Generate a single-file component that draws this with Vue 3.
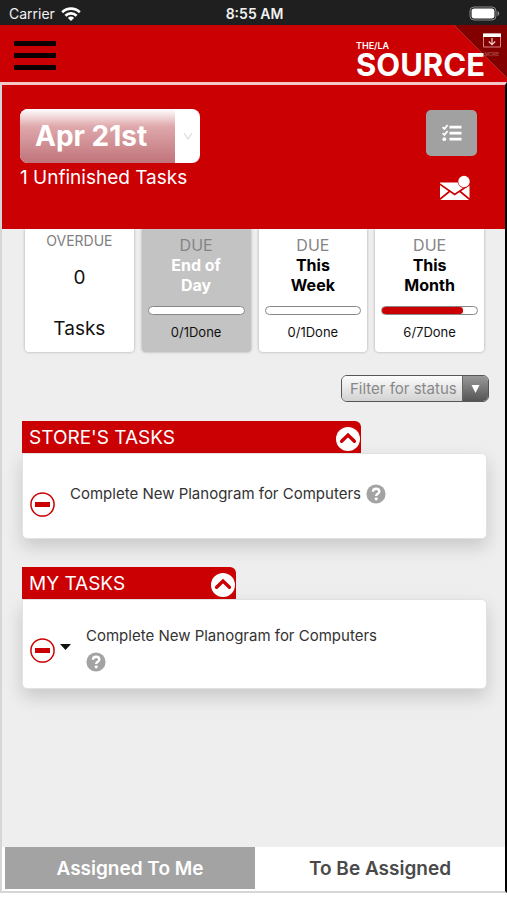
<script setup>
import { ref } from 'vue'

const openStore = ref(true)
const openMine = ref(true)
const tab = ref('me')

const periods = [
  { line1: 'End of', line2: 'Day', done: 0, total: 1, active: true },
  { line1: 'This', line2: 'Week', done: 0, total: 1, active: false },
  { line1: 'This', line2: 'Month', done: 6, total: 7, active: false },
]
</script>

<template>
  <div class="app">
    <div class="status">
      <div class="carrier">
        <span>Carrier</span>
        <svg width="20" height="14" viewBox="0 0 20 14" aria-hidden="true">
          <g fill="none" stroke="#fff" stroke-width="2.6">
            <path d="M1.2 5.2a12.6 12.6 0 0 1 17.6 0" />
            <path d="M4.4 8.7a8 8 0 0 1 11.2 0" />
          </g>
          <path d="M10 14 6.9 10.9a4.4 4.4 0 0 1 6.2 0z" fill="#fff" />
        </svg>
      </div>
      <div class="clock">8:55 AM</div>
      <div class="battery">
        <svg width="31" height="15" viewBox="0 0 31 15" aria-hidden="true">
          <rect x="1" y="1" width="26" height="13" rx="4" fill="none" stroke="#8a8a8a" />
          <rect x="2.6" y="2.6" width="22.8" height="9.8" rx="2.6" fill="#fff" />
          <path d="M28.5 5v5q1.800-.8 1.800-2.500t-1.800-2.500z" fill="#8a8a8a" />
        </svg>
      </div>
    </div>

    <header class="header">
      <button class="burger" aria-label="Menu"><i></i><i></i><i></i></button>
      <div class="logo">
        <span class="logo-top">THE/LA</span>
        <span class="logo-main">SOURCE</span>
      </div>
      <button class="corner" aria-label="More">
        <svg width="53" height="53" viewBox="0 0 53 53" aria-hidden="true">
          <path d="M0 0h53v53z" fill="#820000" />
          <path d="M0 0 53 53" stroke="#b04030" stroke-width=".8" />
          <path d="M29.500 9h17v13h-17z" fill="none" stroke="#d98080" />
          <path d="M29 8.500h18v3.500h-18z" fill="#fff" />
          <path d="M38 13v6.500M34.800 16.500l3.200 3.200 3.200-3.200" fill="none" stroke="#f3cccc" stroke-width="1.200" />
        </svg>
        <span class="corner-text">MORE</span>
      </button>
    </header>

    <main class="panel">
      <section class="hero">
        <div>
          <div class="date">
            <select aria-label="Date"><option>Apr 21st</option></select>
            <span class="date-arrow">
              <svg width="10" height="8" viewBox="0 0 10 8" aria-hidden="true"><path d="M1 1l4 6 4-6" fill="none" stroke="#ddd" stroke-width="1.300" /></svg>
            </span>
          </div>
          <p class="unfinished">1 Unfinished Tasks</p>
        </div>
        <div class="actions">
          <button class="list-btn" aria-label="Task list">
            <svg width="20" height="18" viewBox="0 0 20 18" aria-hidden="true">
              <path d="M7.500 3.200h12M7.500 9.200h12M7.500 15.200h12" stroke="#fff" stroke-width="2.700" />
              <path d="M.6 3.200l1.800 1.800L5.600 1M.6 9.200l1.800 1.800L5.600 7" fill="none" stroke="#fff" stroke-width="1.800" />
              <circle cx="2.300" cy="15.200" r="1.900" fill="#fff" />
            </svg>
          </button>
          <button class="mail-btn" aria-label="Messages">
            <svg width="30" height="26" viewBox="0 0 30 26" aria-hidden="true">
              <path d="M0 7.500h29.500V25H0z" fill="#fff" />
              <path d="M-1 8.500l15.700 11L30.500 9M-1 25l11-9M30.500 25 19.500 16" fill="none" stroke="#cb0003" stroke-width="1.700" />
              <circle cx="24" cy="6.500" r="6.300" fill="#cb0003" />
              <circle cx="24" cy="6.500" r="5.700" fill="#fff" />
            </svg>
          </button>
        </div>
      </section>

      <section class="cards">
        <div class="card overdue">
          <span class="overdue-title">OVERDUE</span>
          <span>0</span>
          <span class="overdue-unit">Tasks</span>
        </div>
        <div v-for="p in periods" :key="p.line2" class="card" :class="{ active: p.active }">
          <span class="due">DUE</span>
          <strong>{{ p.line1 }}<br />{{ p.line2 }}</strong>
          <div class="bar"><div class="fill" :style="{ width: (p.done / p.total) * 100 + '%' }"></div></div>
          <span class="done">{{ p.done }}/{{ p.total }}Done</span>
        </div>
      </section>

      <div class="filter-row">
        <div class="filter">
          <select aria-label="Filter for status"><option>Filter for status</option></select>
          <span class="filter-arrow">
            <svg width="9" height="8" viewBox="0 0 9 8" aria-hidden="true"><path d="M.5 0h8L4.500 8z" fill="#fff" /></svg>
          </span>
        </div>
      </div>

      <section class="group">
        <div class="group-head store">
          <h2>STORE'S TASKS</h2>
          <button class="toggle" aria-label="Toggle store's tasks" @click="openStore = !openStore">
            <svg width="24" height="24" viewBox="0 0 24 24" aria-hidden="true"><circle cx="12" cy="12" r="12" fill="#fff" /><path d="M5.600 14.300 12 8.100l6.400 6.200" fill="none" stroke="#cb0003" stroke-width="3.400" stroke-linecap="round" /></svg>
          </button>
        </div>
        <div v-if="openStore" class="task">
          <svg class="minus" width="25" height="25" viewBox="0 0 25 25" aria-hidden="true"><circle cx="12.500" cy="12.500" r="11.600" fill="none" stroke="#cb0003" stroke-width="1.500" /><path d="M5 10h15v5H5z" fill="#cb0003" /></svg>
          <div class="task-text">
            <span>Complete New Planogram for Computers</span>
            <svg class="help" width="20" height="20" viewBox="0 0 20 20" aria-hidden="true"><circle cx="10" cy="10" r="9.600" fill="#a3a3a3" /><path d="M6.900 7.700C7 5.700 8.300 4.700 10.100 4.700c1.800 0 3.200 1 3.200 2.700 0 2.500-3.100 2.300-3.100 4.500" fill="none" stroke="#fff" stroke-width="2.400" /><circle cx="10.200" cy="14.800" r="1.600" fill="#fff" /></svg>
          </div>
        </div>
      </section>

      <section class="group">
        <div class="group-head mine">
          <h2>MY TASKS</h2>
          <button class="toggle" aria-label="Toggle my tasks" @click="openMine = !openMine">
            <svg width="24" height="24" viewBox="0 0 24 24" aria-hidden="true"><circle cx="12" cy="12" r="12" fill="#fff" /><path d="M5.600 14.300 12 8.100l6.400 6.200" fill="none" stroke="#cb0003" stroke-width="3.400" stroke-linecap="round" /></svg>
          </button>
        </div>
        <div v-if="openMine" class="task own">
          <button class="state" aria-label="Change task state">
            <svg class="minus" width="25" height="25" viewBox="0 0 25 25" aria-hidden="true"><circle cx="12.500" cy="12.500" r="11.600" fill="none" stroke="#cb0003" stroke-width="1.500" /><path d="M5 10h15v5H5z" fill="#cb0003" /></svg>
            <svg class="caret" width="11" height="6" viewBox="0 0 11 6" aria-hidden="true"><path d="M0 0h11L5.500 6z" fill="#111" /></svg>
          </button>
          <div class="task-text stacked">
            <span>Complete New Planogram for Computers</span>
            <svg class="help" width="20" height="20" viewBox="0 0 20 20" aria-hidden="true"><circle cx="10" cy="10" r="9.600" fill="#a3a3a3" /><path d="M6.900 7.700C7 5.700 8.300 4.700 10.100 4.700c1.800 0 3.200 1 3.200 2.700 0 2.500-3.100 2.300-3.100 4.500" fill="none" stroke="#fff" stroke-width="2.400" /><circle cx="10.200" cy="14.800" r="1.600" fill="#fff" /></svg>
          </div>
        </div>
      </section>

      <nav class="tabs">
        <button :class="{ on: tab === 'me' }" @click="tab = 'me'">Assigned To Me</button>
        <button :class="{ on: tab === 'open' }" @click="tab = 'open'">To Be Assigned</button>
      </nav>
    </main>
  </div>
</template>

<style>
body {
  background: #fff;
}
</style>

<style scoped>
* {
  box-sizing: border-box;
}
.app {
  display: flex;
  flex-direction: column;
  min-height: 100vh;
  padding-bottom: 7px;
  font-family: Inter, "Liberation Sans", sans-serif;
  color: #111;
}
button,
select {
  margin: 0;
  padding: 0;
  border: 0;
  background: none;
  font: inherit;
  color: inherit;
  appearance: none;
}
svg {
  display: block;
  flex: none;
}
.status {
  display: grid;
  grid-template-columns: 1fr auto 1fr;
  align-items: center;
  height: 25px;
  padding: 2px 7px 0 9px;
  background: #1f1f1f;
  color: #f2f2f2;
  font-size: 14px;
}
.carrier {
  display: flex;
  align-items: center;
  gap: 6px;
}
.clock {
  font-weight: 600;
}
.battery {
  justify-self: end;
}
.header {
  position: relative;
  display: flex;
  align-items: center;
  justify-content: space-between;
  height: 57px;
  padding: 0 22px 0 14px;
  background: #cb0003;
}
.burger {
  display: flex;
  flex-direction: column;
  gap: 7px;
  width: 42px;
  padding-top: 4px;
}
.burger i {
  height: 5px;
  background: #0c0000;
}
.logo {
  position: relative;
  z-index: 1;
  display: flex;
  flex-direction: column;
  padding-top: 14px;
  color: #fff;
}
.logo-top {
  font-size: 9px;
  line-height: 9px;
  font-weight: 600;
}
.logo-main {
  font-size: 31px;
  line-height: 30px;
  font-weight: 700;
}
.corner {
  position: absolute;
  top: 0;
  right: 0;
}
.corner-text {
  position: absolute;
  top: 26px;
  right: 8px;
  font-size: 5px;
  line-height: 6px;
  color: #b86060;
}
.panel {
  flex: 1;
  display: flex;
  flex-direction: column;
  border: 2px solid #d6d6d6;
  border-top: 3px solid #f6c5c5;
  border-right-color: #000;
  background: #eee;
}
.hero {
  display: flex;
  justify-content: space-between;
  height: 144px;
  padding: 24px 28px 0 18px;
  background: #cb0003;
  color: #fff;
}
.date {
  display: flex;
  width: 180px;
  height: 54px;
  overflow: hidden;
  border-radius: 8px;
  background: #fff;
}
.date select {
  flex: 1;
  padding-left: 15px;
  background: linear-gradient(#fff 0%, #dfa9ac 32%, #c0737a 100%);
  font-size: 28px;
  font-weight: 700;
}
.date-arrow {
  display: flex;
  align-items: center;
  justify-content: center;
  width: 25px;
}
.unfinished {
  margin: 4px 0 0;
  font-size: 19px;
  line-height: 22px;
}
.actions {
  display: flex;
  flex-direction: column;
  align-items: center;
  gap: 19px;
  padding-top: 1px;
}
.list-btn {
  display: flex;
  align-items: center;
  justify-content: center;
  width: 51px;
  height: 46px;
  border-radius: 5px;
  background: #a1a1a1;
}
.mail-btn {
  padding-left: 6px;
}
.cards {
  display: grid;
  grid-template-columns: repeat(4, 1fr);
  gap: 8px;
  padding: 0 21px 0 23px;
}
.card {
  display: flex;
  flex-direction: column;
  align-items: center;
  height: 123px;
  padding: 6px 6px 0;
  border-radius: 0 0 4px 4px;
  background: #fff;
  box-shadow: 0 0 3px rgba(0, 0, 0, 0.3);
  clip-path: inset(0 -4px -4px -4px);
}
.card.active {
  background: #c3c3c3;
}
.overdue {
  padding-top: 4px;
  font-size: 19px;
  line-height: 24px;
  gap: 17px;
}
.overdue-title {
  font-size: 14px;
  line-height: 16px;
  color: #808080;
}
.overdue-unit {
  margin-top: 10px;
}
.due {
  font-size: 16px;
  line-height: 20px;
  color: #858585;
}
.card strong {
  font-size: 16px;
  line-height: 20px;
  font-weight: 700;
  text-align: center;
  color: #000;
}
.card.active strong {
  color: #fff;
}
.bar {
  width: 100%;
  height: 9px;
  margin-top: 11px;
  overflow: hidden;
  border: 1px solid #888;
  border-radius: 5px;
  background: #fff;
}
.fill {
  height: 100%;
  border-radius: 0 3px 3px 0;
  background: #cb0003;
}
.done {
  margin-top: 9px;
  font-size: 13px;
  line-height: 16px;
}
.filter-row {
  display: flex;
  justify-content: flex-end;
  padding: 23px 16px 19px;
}
.filter {
  display: flex;
  width: 148px;
  height: 27px;
  overflow: hidden;
  border: 1px solid #555;
  border-radius: 6px;
}
.filter select {
  flex: 1;
  min-width: 0;
  padding-left: 8px;
  background: linear-gradient(#fcfcfc, #d2d2d2);
  font-size: 15px;
  color: #888;
}
.filter-arrow {
  display: flex;
  align-items: center;
  justify-content: center;
  width: 26px;
  border-left: 1px solid #666;
  background: linear-gradient(#999, #555);
}
.group {
  padding: 0 18px 0 20px;
  margin-bottom: 28px;
}
.group-head {
  display: flex;
  align-items: center;
  justify-content: space-between;
  height: 32px;
  padding: 1px 1px 0 7px;
  border-radius: 0 6px 0 0;
  background: #cb0003;
  color: #fff;
}
.store {
  width: 73%;
}
.mine {
  width: 46%;
}
.group-head h2 {
  margin: 0;
  font-size: 19px;
  line-height: 24px;
  font-weight: 400;
}
.toggle {
  padding-top: 3px;
}
.task {
  display: flex;
  min-height: 86px;
  padding: 30px 7px 16px;
  border: 1px solid #e2e2e2;
  border-radius: 0 5px 5px 5px;
  background: #fff;
  box-shadow: 0 8px 18px rgba(0, 0, 0, 0.16);
  font-size: 15px;
  line-height: 20px;
  color: #333;
}
.minus {
  margin-top: 8px;
}
.task-text {
  display: flex;
  align-items: flex-start;
  gap: 5px;
  margin-left: 15px;
}
.task.own {
  min-height: 90px;
  padding-top: 26px;
}
.state {
  display: flex;
  align-items: flex-start;
  gap: 5px;
  padding-top: 4px;
}
.caret {
  margin-top: 14px;
}
.stacked {
  flex-direction: column;
  gap: 6px;
}
.tabs {
  display: grid;
  grid-template-columns: 1fr 1fr;
  height: 44px;
  margin-top: auto;
  padding: 0 0 2px 3px;
  background: #fff;
}
.tabs button {
  font-size: 19px;
  font-weight: 600;
  color: #4a4a4a;
}
.tabs .on {
  background: #a3a3a3;
  color: #fff;
}
</style>
